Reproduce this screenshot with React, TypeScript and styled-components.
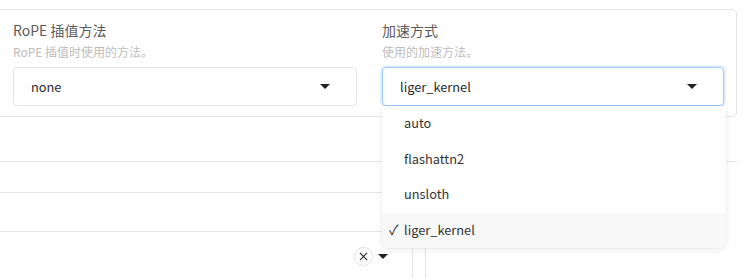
import styled, { createGlobalStyle } from "styled-components";

const Global = createGlobalStyle`
  body {
    margin: 0;
    background: #fff;
    font-family: "Noto Sans CJK SC", "Noto Sans", sans-serif;
    overflow: hidden;
  }
`;

const Page = styled.div`
  padding-top: 9px;
  width: 743px;
  height: 278px;
  box-sizing: border-box;
  position: relative;
`;

//Form box with two dropdown fields
const Form = styled.div`
  width: 737px;
  box-sizing: border-box;
  display: grid;
  grid-template-columns: 369px 1fr;
  border: 1px solid #e4e4e4;
  border-left: none;
  border-radius: 0 5px 5px 0;
`;

const Field = styled.div`
  padding: 10px 12px 10px 13px;
  position: relative;
`;

const Label = styled.div`
  font-size: 14px;
  line-height: 20px;
  color: #5b5b5b;
`;

const Info = styled.div`
  font-size: 12px;
  line-height: 18px;
  margin-top: 3px;
  color: #bdbdbd;
`;

const Select = styled.div<{ $focused?: boolean }>`
  margin-top: 6px;
  height: 39px;
  box-sizing: border-box;
  display: flex;
  align-items: center;
  justify-content: space-between;
  padding: 0 26px 0 17px;
  border: 1px solid ${(p) => (p.$focused ? "#9cc8fb" : "#e4e4e4")};
  border-radius: 4px;
  box-shadow: ${(p) => (p.$focused ? "0 0 0 2px #e4f0fe" : "none")};
  font-size: 12.8px;
  color: #2a2a2a;
`;

const Caret = styled.span`
  width: 0;
  height: 0;
  border-left: 5px solid transparent;
  border-right: 5px solid transparent;
  border-top: 5px solid #222;
`;

const Menu = styled.ul`
  position: absolute;
  top: 106px;
  left: 382px;
  width: 344px;
  margin: 0;
  padding: 0;
  list-style: none;
  background: #fff;
  border-radius: 0 0 6px 6px;
  box-shadow: 0 2px 6px rgba(0, 0, 0, 0.08), 0 0 1px rgba(0, 0, 0, 0.12);
  overflow: hidden;
  z-index: 5;
`;

const Item = styled.li<{ $selected?: boolean }>`
  height: 35.5px;
  box-sizing: border-box;
  display: flex;
  align-items: center;
  padding: 0 0 2px 7px;
  font-size: 12.8px;
  color: #333;
  background: ${(p) => (p.$selected ? "#f8f8f8" : "#fff")};
`;

const Check = styled.span<{ $show?: boolean }>`
  display: inline-block;
  width: 15px;
  font-size: 14px;
  visibility: ${(p) => (p.$show ? "visible" : "hidden")};
`;

//lower part of the page, mostly lines
const Lower = styled.div`
  width: 737px;
  margin-top: 44px;
  border-top: 1px solid #e4e4e4;
`;

const Split = styled.div`
  display: grid;
  grid-template-columns: 413px 1fr;
  column-gap: 12px;
  margin-top: 30px;
`;

const LeftCol = styled.div`
  border-top: 1px solid #e4e4e4;
  border-right: 1px solid #e4e4e4;
`;

const Row = styled.div`
  height: 38px;
  border-bottom: 1px solid #e4e4e4;
`;

const Controls = styled.div`
  height: 48px;
  display: flex;
  align-items: center;
  justify-content: flex-end;
  gap: 5px;
  padding-right: 24px;
`;

const ClearBtn = styled.span`
  width: 19px;
  height: 19px;
  box-sizing: border-box;
  border: 1px solid #e2e2e2;
  border-radius: 50%;
  display: flex;
  align-items: center;
  justify-content: center;
`;

const RightCol = styled.div`
  border-left: 1px solid #e4e4e4;
  height: 90px;
`;

const options = ["auto", "flashattn2", "unsloth", "liger_kernel"];

function App() {
  const selected = "liger_kernel";

  return (
    <Page>
      <Global />
      <Form>
        <Field>
          <Label>RoPE 插值方法</Label>
          <Info>RoPE 插值时使用的方法。</Info>
          <Select>
            <span>none</span>
            <Caret />
          </Select>
        </Field>
        <Field>
          <Label>加速方式</Label>
          <Info>使用的加速方法。</Info>
          <Select $focused>
            <span>{selected}</span>
            <Caret />
          </Select>
        </Field>
      </Form>
      <Menu>
        {options.map((o) => (
          <Item key={o} $selected={o === selected}>
            <Check $show={o === selected}>✓</Check>
            {o}
          </Item>
        ))}
      </Menu>
      <Lower>
        <Split>
          <LeftCol>
            <Row />
            <Controls>
              <ClearBtn>
                <svg width="9" height="9" viewBox="0 0 10 10">
                  <path d="M1 1 L9 9 M9 1 L1 9" stroke="#333" strokeWidth="1.3" />
                </svg>
              </ClearBtn>
              <Caret />
            </Controls>
          </LeftCol>
          <RightCol />
        </Split>
      </Lower>
    </Page>
  );
}

export default App;
